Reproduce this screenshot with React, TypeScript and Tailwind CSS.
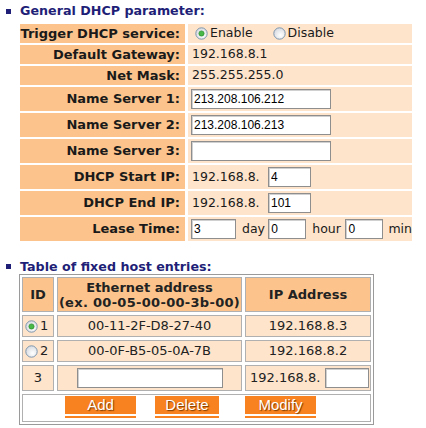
import { useId } from "react";

function Radio({ checked = false }: { checked?: boolean }) {
  const id = useId();
  return (
    <svg width="13" height="13" viewBox="0 0 13 13" className="shrink-0">
      <defs>
        <radialGradient id={id} cx="0.6" cy="0.65" r="0.7">
          <stop offset="0" stopColor="#ffffff" />
          <stop offset="1" stopColor="#d4d8de" />
        </radialGradient>
      </defs>
      <circle cx="6.5" cy="6.5" r="5.7" fill={`url(#${id})`} stroke="#7f96ad" strokeWidth="1" />
      {checked && <circle cx="6.5" cy="6.5" r="2.6" fill="#48b848" stroke="#2b8c2b" strokeWidth="0.7" />}
    </svg>
  );
}

function Field({ value = "", w }: { value?: string; w: string }) {
  return (
    <input
      readOnly
      value={value}
      className={`${w} h-[20px] border border-[#8e8e8e] shadow-[inset_1px_1px_0_#d0d0d0] bg-white px-[2px] font-['Liberation_Sans',Arial,sans-serif] text-[12px] text-black outline-none`}
    />
  );
}

function Label({ children, tall = false }: { children: string; tall?: boolean }) {
  return (
    <div
      className={`${tall ? "h-[24px]" : "h-[19px]"} bg-[#fcc48c] flex items-center justify-end pr-[5px] text-[13px] font-bold text-[#1a1a1a]`}
    >
      {children}
    </div>
  );
}

function Value({ children }: { children: React.ReactNode }) {
  return <div className="bg-[#fde4cb] flex items-center pl-[3px] text-[12.5px] text-[#1a1a1a]">{children}</div>;
}

function Bullet() {
  return <span className="w-[5px] h-[5px] bg-[#1f1f78] mr-[9px]" />;
}

function OrangeButton({ label, w, ml }: { label: string; w: string; ml: string }) {
  return (
    <div className={`${ml} ${w} flex flex-col`}>
      <div className="h-[18px] bg-[#f7821f] flex items-center justify-center font-['Liberation_Sans',Arial,sans-serif] text-[15px] text-white [text-shadow:1px_1px_1px_#7a3a00]">
        {label}
      </div>
      <div className="mt-[2px] h-[2px] bg-[#f7821f]" />
    </div>
  );
}

export default function App() {
  return (
    <div className="w-[426px] h-[428px] bg-white overflow-hidden font-['DejaVu_Sans',Verdana,sans-serif] pl-[6px] pt-[2px]">
      <h2 className="flex items-center h-[18px] text-[12.7px] font-bold text-[#1f1f78]">
        <Bullet />
        General DHCP parameter:
      </h2>

      <div className="ml-[14px] mt-[4px] grid grid-cols-[165px_224px] gap-x-[3px] gap-y-[2px]">
        <Label>Trigger DHCP service:</Label>
        <Value>
          <div className="flex items-center pl-[4px]">
            <Radio checked />
            <span className="ml-[2px]">Enable</span>
            <span className="ml-[20px]">
              <Radio />
            </span>
            <span className="ml-[2px]">Disable</span>
          </div>
        </Value>

        <Label>Default Gateway:</Label>
        <Value>
          <span className="pl-[1px]">192.168.8.1</span>
        </Value>

        <Label>Net Mask:</Label>
        <Value>
          <span className="pl-[1px]">255.255.255.0</span>
        </Value>

        <Label tall>Name Server 1:</Label>
        <Value>
          <Field value="213.208.106.212" w="w-[140px]" />
        </Value>

        <Label tall>Name Server 2:</Label>
        <Value>
          <Field value="213.208.106.213" w="w-[140px]" />
        </Value>

        <Label tall>Name Server 3:</Label>
        <Value>
          <Field w="w-[140px]" />
        </Value>

        <Label tall>DHCP Start IP:</Label>
        <Value>
          <span className="pl-[1px] w-[77px]">192.168.8.</span>
          <Field value="4" w="w-[43px]" />
        </Value>

        <Label tall>DHCP End IP:</Label>
        <Value>
          <span className="pl-[1px] w-[77px]">192.168.8.</span>
          <Field value="101" w="w-[43px]" />
        </Value>

        <Label tall>Lease Time:</Label>
        <Value>
          <Field value="3" w="w-[45px]" />
          <span className="ml-[6px] w-[27px]">day</span>
          <Field value="0" w="w-[38px]" />
          <span className="ml-[6px] w-[34px]">hour</span>
          <Field value="0" w="w-[38px]" />
          <span className="ml-[5px]">min</span>
        </Value>
      </div>

      <h2 className="mt-[18px] flex items-center h-[15px] text-[12.7px] font-bold text-[#1f1f78]">
        <Bullet />
        Table of fixed host entries:
      </h2>

      <div className="ml-[13px] w-[355px] border border-[#9a9a9a] p-[2px] grid grid-cols-[32px_185px_126px] gap-[3px] text-[13px] text-[#222]">
        <div className="h-[35px] bg-[#fcc48c] border border-[#b0b0b0] flex items-center justify-center font-bold">ID</div>
        <div className="bg-[#fcc48c] border border-[#b0b0b0] flex flex-col items-center justify-center font-bold leading-[15px]">
          <span>Ethernet address</span>
          <span className="tracking-[0.3px]">(ex. 00-05-00-00-3b-00)</span>
        </div>
        <div className="bg-[#fcc48c] border border-[#b0b0b0] flex items-center justify-center font-bold">IP Address</div>

        <div className="h-[22px] bg-[#fde4cb] border border-[#b0b0b0] flex items-center pl-[2px]">
          <Radio checked />
          <span className="ml-[2px]">1</span>
        </div>
        <div className="bg-[#fde4cb] border border-[#b0b0b0] flex items-center justify-center">00-11-2F-D8-27-40</div>
        <div className="bg-[#fde4cb] border border-[#b0b0b0] flex items-center justify-center">192.168.8.3</div>

        <div className="h-[22px] bg-[#fde4cb] border border-[#b0b0b0] flex items-center pl-[2px]">
          <Radio />
          <span className="ml-[2px]">2</span>
        </div>
        <div className="bg-[#fde4cb] border border-[#b0b0b0] flex items-center justify-center">00-0F-B5-05-0A-7B</div>
        <div className="bg-[#fde4cb] border border-[#b0b0b0] flex items-center justify-center">192.168.8.2</div>

        <div className="h-[26px] bg-[#fde4cb] border border-[#b0b0b0] flex items-center justify-center">3</div>
        <div className="bg-[#fde4cb] border border-[#b0b0b0] flex items-center justify-center">
          <Field w="w-[146px]" />
        </div>
        <div className="bg-[#fde4cb] border border-[#b0b0b0] flex items-center pl-[4px]">
          <span className="w-[75px]">192.168.8.</span>
          <Field w="w-[44px]" />
        </div>

        <div className="col-span-3 h-[28px] bg-white border border-[#b0b0b0] flex items-start pt-[1px]">
          <OrangeButton label="Add" w="w-[71px]" ml="ml-[42px]" />
          <OrangeButton label="Delete" w="w-[64px]" ml="ml-[19px]" />
          <OrangeButton label="Modify" w="w-[71px]" ml="ml-[26px]" />
        </div>
      </div>
    </div>
  );
}
